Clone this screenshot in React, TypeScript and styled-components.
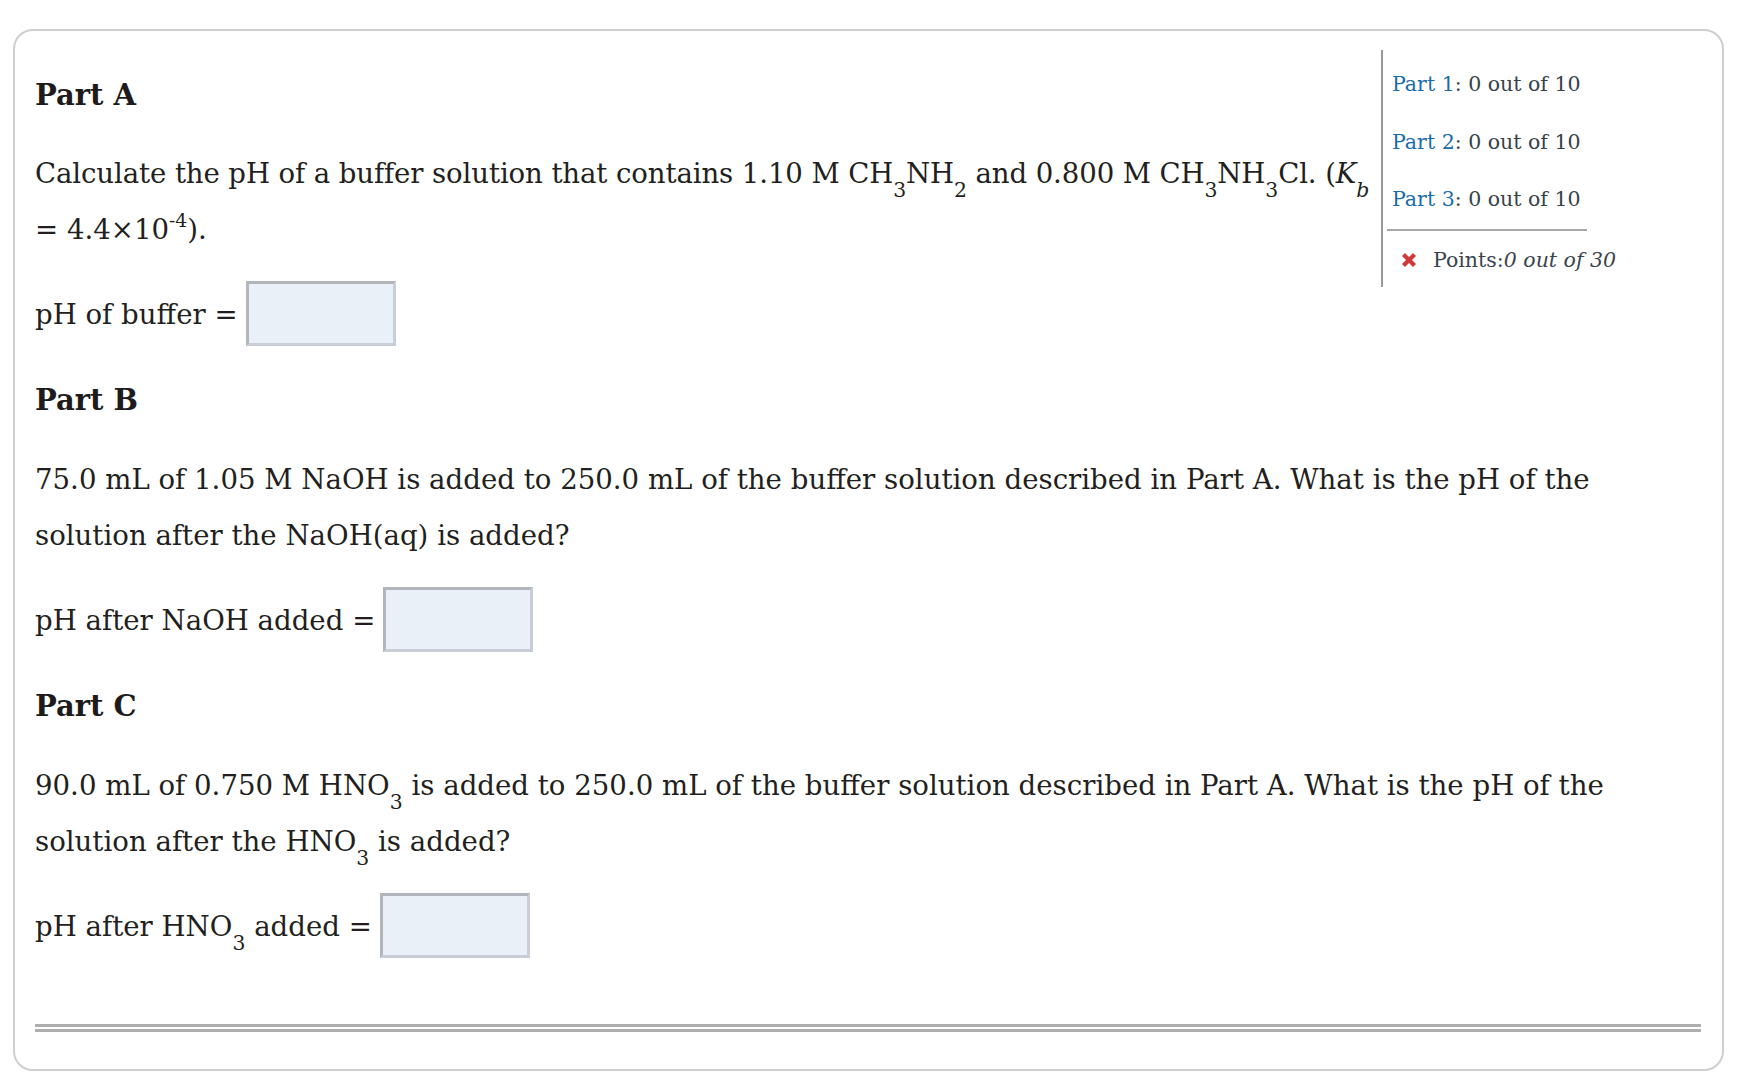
import React from "react";
import styled, { createGlobalStyle } from "styled-components";

const GlobalStyle = createGlobalStyle`
  html, body {
    margin: 0;
    padding: 0;
    background: #ffffff;
  }
  body {
    width: 1744px;
    font-family: "DejaVu Serif", "Liberation Serif", serif;
    color: #231f20;
  }
  * { box-sizing: border-box; }
`;

const Card = styled.div`
  margin: 29px 0 0 13px;
  width: 1711px;
  border: 2px solid #cfcfcf;
  border-radius: 20px;
  padding: 19px 21px 37px 20px;
  background: #ffffff;
`;

const Sidebar = styled.aside`
  float: right;
  width: 320px;
  border-left: 2px solid #9a9a9a;
  padding: 6px 0 7px 0;
  font-family: "DejaVu Serif", "Liberation Serif", serif;
  font-size: 20.5px;
  color: #36424a;
`;

const ScoreItem = styled.div`
  height: 57.5px;
  line-height: 57.5px;
  padding-left: 9px;
  white-space: nowrap;
`;

const ScoreLabel = styled.span`
  color: #1b6ca8;
`;

const SidebarRule = styled.hr`
  margin: 0 0 0 4px;
  width: 200px;
  height: 2px;
  border: none;
  background: #a8a8a8;
`;

const PointsRow = styled.div`
  margin-top: 9.5px;
  height: 40px;
  line-height: 40px;
  padding-left: 17px;
  display: flex;
  align-items: center;
  white-space: nowrap;
  color: #3a444c;
`;

const XMark = styled.svg`
  width: 18px;
  height: 18px;
  margin-right: 15px;
  flex: none;
`;

const Em = styled.em`
  font-style: italic;
`;

const Section = styled.section<{ $first?: boolean }>`
  margin-top: ${(p) => (p.$first ? "25px" : "34px")};
`;

const Heading = styled.h2`
  margin: 0;
  font-size: 29px;
  line-height: 40px;
  font-weight: 700;
  color: #1e1b1c;
`;

const Question = styled.p<{ $gap?: number }>`
  margin: ${(p) => p.$gap ?? 32}px 0 0 0;
  font-size: 27.6px;
  line-height: 56px;
`;

const Line = styled.span<{ $tight?: boolean }>`
  display: block;
  white-space: nowrap;
  letter-spacing: ${(p) => (p.$tight ? "-0.12px" : "normal")};
`;

const Sub = styled.sub`
  font-size: 0.74em;
  line-height: 0;
  vertical-align: -0.7em;
`;

const Sup = styled.sup`
  font-size: 0.68em;
  line-height: 0;
  vertical-align: 0.66em;
`;

const Var = styled.i`
  font-style: italic;
`;

const AnswerRow = styled.div`
  margin-top: 23px;
  display: flex;
  align-items: center;
  height: 65px;
`;

const AnswerLabel = styled.label`
  font-size: 27.6px;
  line-height: 56px;
  margin-top: 3px;
  margin-right: 8px;
  white-space: nowrap;
`;

const AnswerInput = styled.input`
  width: 150px;
  height: 65px;
  background: #e9f0f8;
  border-style: solid;
  border-width: 3px;
  border-color: #b1b5bc #c9cdd5 #c9cdd5 #b1b5bc;
  outline: none;
  padding: 0 6px;
  font-size: 24px;
  font-family: "DejaVu Serif", serif;
`;

const DoubleRule = styled.div`
  clear: both;
  margin-top: 66px;
  height: 8px;
  border-top: 3px solid #adadad;
  border-bottom: 3px solid #adadad;
`;

export default function App() {
  return (
    <>
      <GlobalStyle />
      <Card>
        <Sidebar>
          <ScoreItem>
            <ScoreLabel>Part 1</ScoreLabel>: 0 out of 10
          </ScoreItem>
          <ScoreItem>
            <ScoreLabel>Part 2</ScoreLabel>: 0 out of 10
          </ScoreItem>
          <ScoreItem>
            <ScoreLabel>Part 3</ScoreLabel>: 0 out of 10
          </ScoreItem>
          <SidebarRule />
          <PointsRow>
            <XMark viewBox="0 0 18 18" aria-hidden="true">
              <path
                d="M2 5 L5 2 L9 6 L13 2 L16 5 L12 9 L16 13 L13 16 L9 12 L5 16 L2 13 L6 9 Z"
                fill="#cf3a3a"
              />
            </XMark>
            Points:<Em>0 out of 30</Em>
          </PointsRow>
        </Sidebar>

        <Section $first>
          <Heading>Part A</Heading>
          <Question $gap={31}>
            <Line $tight>
              Calculate the pH of a buffer solution that contains 1.10 M CH<Sub>3</Sub>NH<Sub>2</Sub> and 0.800 M CH
              <Sub>3</Sub>NH<Sub>3</Sub>Cl. (<Var>K</Var>
              <Sub>
                <Var>b</Var>
              </Sub>
            </Line>
            <Line>
              = 4.4×10<Sup>-4</Sup>).
            </Line>
          </Question>
          <AnswerRow>
            <AnswerLabel>pH of buffer =</AnswerLabel>
            <AnswerInput type="text" aria-label="pH of buffer" />
          </AnswerRow>
        </Section>

        <Section>
          <Heading>Part B</Heading>
          <Question>
            <Line>
              75.0 mL of 1.05 M NaOH is added to 250.0 mL of the buffer solution described in Part A. What is the pH of the
            </Line>
            <Line>solution after the NaOH(aq) is added?</Line>
          </Question>
          <AnswerRow>
            <AnswerLabel>pH after NaOH added =</AnswerLabel>
            <AnswerInput type="text" aria-label="pH after NaOH added" />
          </AnswerRow>
        </Section>

        <Section>
          <Heading>Part C</Heading>
          <Question>
            <Line>
              90.0 mL of 0.750 M HNO<Sub>3</Sub> is added to 250.0 mL of the buffer solution described in Part A. What is the pH of the
            </Line>
            <Line>
              solution after the HNO<Sub>3</Sub> is added?
            </Line>
          </Question>
          <AnswerRow>
            <AnswerLabel>
              pH after HNO<Sub>3</Sub> added =
            </AnswerLabel>
            <AnswerInput type="text" aria-label="pH after HNO3 added" />
          </AnswerRow>
        </Section>

        <DoubleRule />
      </Card>
    </>
  );
}
